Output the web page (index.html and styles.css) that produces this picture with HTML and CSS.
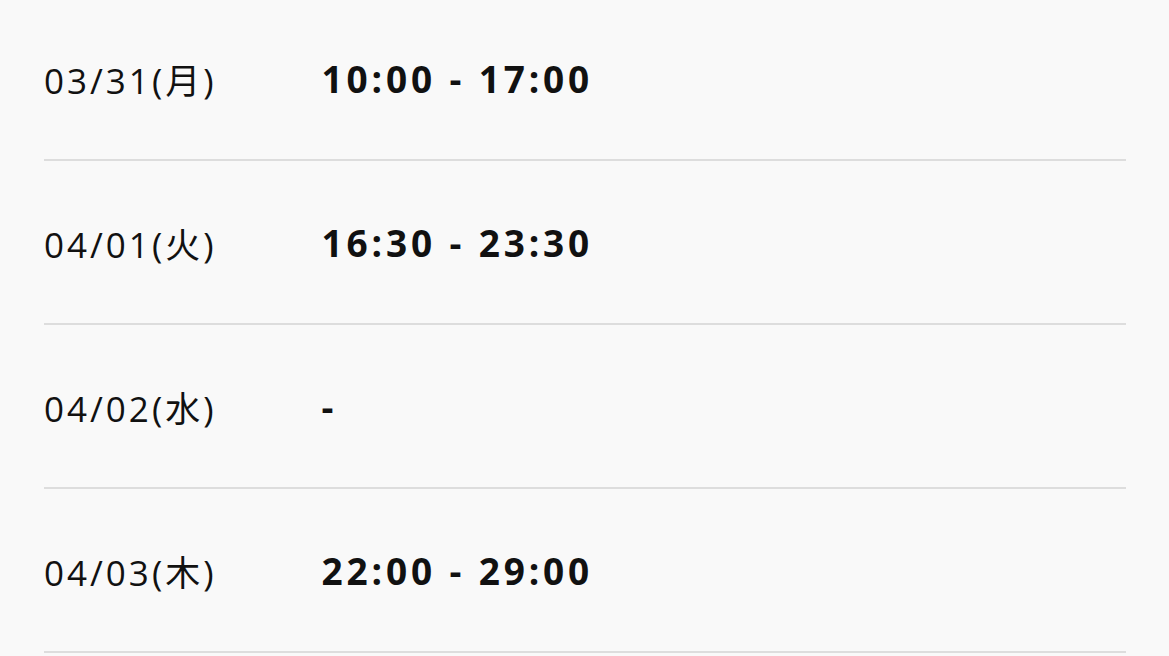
FILE: index.html
```html
<!DOCTYPE html>
<html lang="ja">
<head>
<meta charset="utf-8">
<link rel="stylesheet" href="styles.css">
</head>
<body>
<div class="list">
  <div class="row"><span class="date">03/31(月)</span><span class="time">10:00 - 17:00</span></div>
  <div class="row"><span class="date">04/01(火)</span><span class="time">16:30 - 23:30</span></div>
  <div class="row"><span class="date">04/02(水)</span><span class="time">-</span></div>
  <div class="row"><span class="date">04/03(木)</span><span class="time">22:00 - 29:00</span></div>
</div>
</body>
</html>
```
FILE: styles.css
```css
html, body {
  margin: 0;
  padding: 0;
  background: #f9f9f9;
}
body {
  font-family: "Open Sans", "Noto Sans CJK JP", sans-serif;
  color: #111;
}
.list {
  margin: -3px 43px 0 44px;
}
.row {
  display: flex;
  align-items: center;
  gap: 105px;
  height: 162px;
  border-bottom: 2px solid #dddddd;
}
.date {
  font-size: 35px;
  font-weight: 400;
  letter-spacing: 3px;
}
.time {
  font-size: 37px;
  font-weight: 700;
  letter-spacing: 3.85px;
}
```
